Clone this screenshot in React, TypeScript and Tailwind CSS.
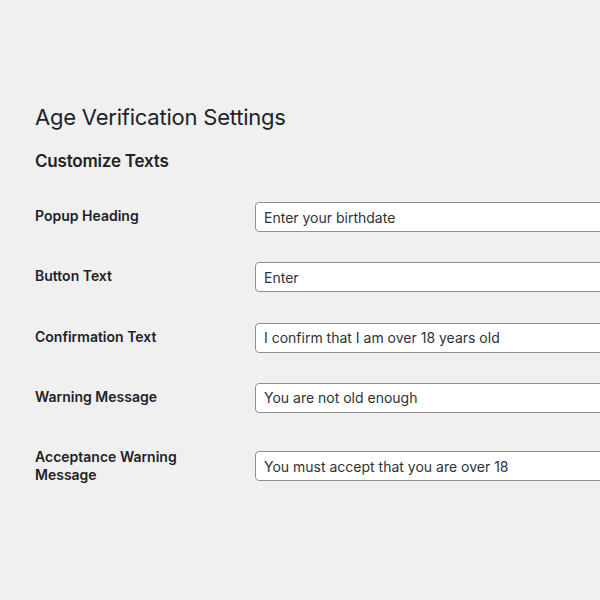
const FIELDS = [
  { label: "Popup Heading", value: "Enter your birthdate" },
  { label: "Button Text", value: "Enter" },
  { label: "Confirmation Text", value: "I confirm that I am over 18 years old" },
  { label: "Warning Message", value: "You are not old enough" },
  { label: "Acceptance Warning Message", value: "You must accept that you are over 18" },
];

export default function App() {
  return (
    <div className="min-h-screen w-full overflow-hidden bg-[#f0f0f1] text-[#1d2327] font-['Inter','Liberation_Sans',sans-serif]">
      <div className="pl-[35px] pt-[102px]">
        <h1 className="text-[22px] leading-[30px] font-normal tracking-[-0.01em]">Age Verification Settings</h1>
        <h2 className="mt-[18px] text-[17px] leading-[22px] font-semibold tracking-[-0.2px]">Customize Texts</h2>

        <div className="mt-[15px] flex flex-col">
          {FIELDS.map((f) => (
            <div key={f.label} className="flex">
              <label className="w-[210px] shrink-0 pr-[10px] py-5 text-[14px] leading-[18.2px] font-semibold">
                {f.label}
              </label>
              <div className="self-center px-[10px] py-[15.15px]">
                <input
                  type="text"
                  defaultValue={f.value}
                  className="w-[350px] h-[30px] rounded-[4px] border border-[#8c8f94] bg-white px-2 text-[14px] text-[#2c3338] outline-none"
                />
              </div>
            </div>
          ))}
        </div>
      </div>
    </div>
  );
}
